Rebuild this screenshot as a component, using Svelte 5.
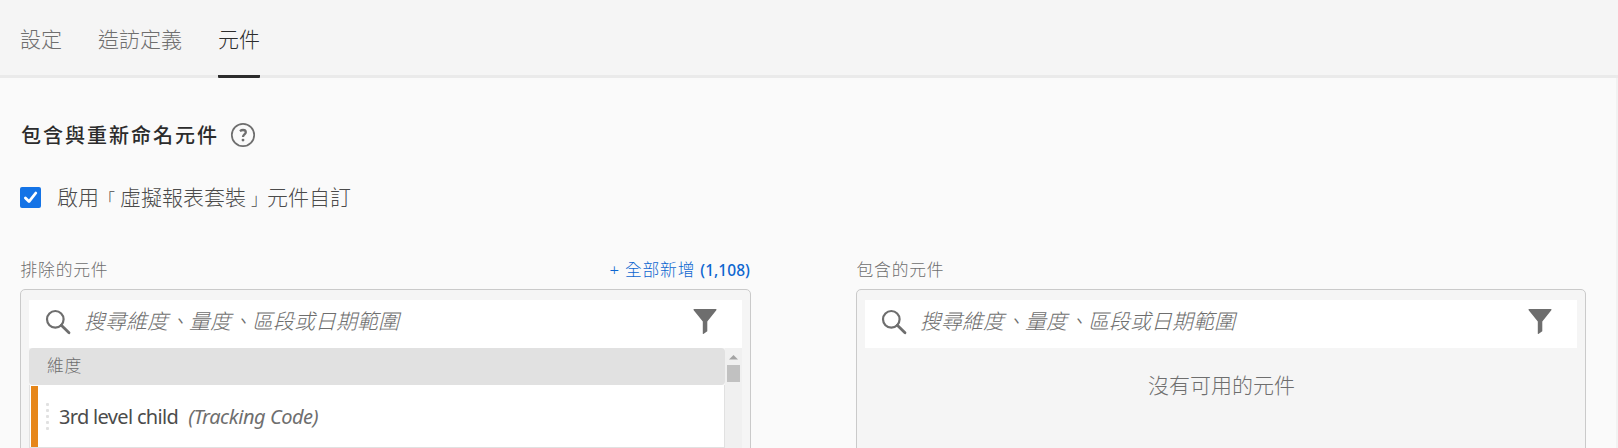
<script>
  const tabs = [
    { label: '設定', active: false },
    { label: '造訪定義', active: false },
    { label: '元件', active: true }
  ];
  const placeholder = '搜尋維度、量度、區段或日期範圍';
  const dots = [0, 1, 2, 3, 4];
</script>

{#snippet search()}
  <div class="search">
    <svg class="lens" width="26" height="26" viewBox="0 0 26 26">
      <circle cx="10.3" cy="10.3" r="8.3" />
      <path d="M16.3 16.3 L24 23.8" />
    </svg>
    <span class="placeholder">{placeholder}</span>
    <svg class="funnel" width="24" height="26" viewBox="0 0 24 26">
      <path d="M.9 0H23.1Q23.9 .4 23.3 1.2L14.3 12.4V22.2L10.4 25Q9.8 25.2 9.8 24.5V12.4L.7 1.2Q.1 .4 .9 0Z" />
    </svg>
  </div>
{/snippet}

<div class="page">
  <nav>
    {#each tabs as tab}
      <span class="tab" class:active={tab.active}>{tab.label}</span>
    {/each}
  </nav>
  <main>
    <header>
      <h2>包含與重新命名元件</h2>
      <svg width="26" height="26" viewBox="0 0 26 26" class="help">
        <circle cx="13" cy="13" r="11.2" />
        <path d="M9.9 9.1C11 8.3 12.1 8 13 8C14.8 8 15.8 9 15.8 10.3C15.8 12.3 13 12.7 13 14.9" />
        <circle class="point" cx="13" cy="18.1" r="1.45" />
      </svg>
    </header>
    <label class="enable">
      <span class="box">
        <svg width="21" height="21" viewBox="0 0 21 21"><path d="M5.4 11 L9 14.6 L15.8 6" /></svg>
      </span>
      <span class="text">啟用<span class="open">「</span>虛擬報表套裝<span class="close">」</span>元件自訂</span>
    </label>
    <div class="columns">
      <section>
        <div class="caption">
          <span>排除的元件</span>
          <a class="add"><span>+ 全部新增</span><span class="count">(1,108)</span></a>
        </div>
        <div class="panel">
          {@render search()}
          <div class="list">
            <div class="items">
              <div class="group">維度</div>
              <div class="row">
                <i class="stripe"></i>
                <span class="grip">{#each dots as d}<i></i>{/each}</span>
                <span class="name">3rd level child</span>
                <em>(Tracking Code)</em>
              </div>
            </div>
            <div class="scroll">
              <svg width="9" height="5" viewBox="0 0 9 5"><path d="M4.5 0L9 4.5H0Z" /></svg>
              <div class="thumb"></div>
            </div>
          </div>
        </div>
      </section>
      <section>
        <div class="caption"><span>包含的元件</span></div>
        <div class="panel">
          {@render search()}
          <p class="empty">沒有可用的元件</p>
        </div>
      </section>
    </div>
  </main>
</div>

<style>
  .page {
    box-sizing: border-box;
    height: 448px;
    overflow: hidden;
    background: #fafafa;
    color: #4b4b4b;
    font-family: "Noto Sans", "Noto Sans CJK TC", sans-serif;
    font-size: 21px;
    font-weight: 300;
    line-height: 30px;
    white-space: nowrap;
    display: flex;
    flex-direction: column;
  }
  nav {
    box-sizing: border-box;
    flex: none;
    height: 78px;
    padding-left: 20px;
    display: flex;
    gap: 36px;
    background: #f5f5f5;
    border-bottom: 3px solid #eaeaea;
    color: #6e6e6e;
  }
  .tab {
    box-sizing: border-box;
    height: 78px;
    padding-top: 24px;
  }
  .active {
    color: #2c2c2c;
    border-bottom: 3px solid #2c2c2c;
    border-radius: 1px;
  }
  main {
    flex: 1;
    min-height: 0;
    padding: 42px 31px 0 20px;
    border-right: 2px solid #f2f2f2;
    overflow: hidden;
  }
  header {
    height: 30px;
    display: flex;
    align-items: center;
    gap: 11px;
    padding-left: 1px;
  }
  h2 {
    margin: 1px 0 0;
    font-size: 20px;
    line-height: 30px;
    letter-spacing: 2px;
    font-weight: 500;
    color: #2c2c2c;
  }
  .help { margin-top: 0; }
  .help circle, .help path {
    fill: none;
    stroke: #6e6e6e;
    stroke-width: 1.7;
  }
  .help path { stroke-width: 2.3; }
  .help .point { fill: #6e6e6e; stroke: none; }
  .enable {
    height: 30px;
    margin-top: 33px;
    display: flex;
    align-items: center;
    gap: 15px;
  }
  .text { padding: 0 0 2px 1px; }
  .open, .close { font-size: 16px; line-height: 1; }
  .open { margin-right: 5px; }
  .close { margin-left: 5px; }
  .box {
    width: 21px;
    height: 21px;
    display: flex;
    background: #1473e6;
    border-radius: 2px;
    margin-bottom: 1px;
  }
  .box path {
    fill: none;
    stroke: #fff;
    stroke-width: 2.8;
    stroke-linecap: round;
    stroke-linejoin: round;
  }
  .columns {
    margin-top: 44px;
    display: grid;
    grid-template-columns: 731px 730px;
    column-gap: 105px;
  }
  .caption {
    height: 32px;
    padding-left: .5px;
    display: flex;
    justify-content: space-between;
    font-size: 16.8px;
    line-height: 26px;
    letter-spacing: .8px;
    color: #6e6e6e;
  }
  .add {
    color: #0d66d0;
    display: flex;
    gap: 5px;
    padding-right: 1px;
  }
  .count {
    font-size: 15.5px;
    font-weight: 500;
    letter-spacing: .05px;
  }
  .panel {
    box-sizing: border-box;
    height: 220px;
    padding: 10px 8px;
    border: 1px solid #cacaca;
    border-radius: 5px;
    background: #f5f5f5;
  }
  .search {
    box-sizing: border-box;
    height: 48px;
    padding: 0 25px 0 16px;
    display: flex;
    align-items: center;
    background: #fff;
    color: #6e6e6e;
  }
  .lens {
    fill: none;
    stroke: #6e6e6e;
    stroke-width: 2.2;
    margin-right: 13px;
    margin-top: -4px;
  }
  .lens path { stroke-width: 2.8; stroke-linecap: round; }
  .placeholder {
    flex: 1;
    font-style: italic;
    padding-bottom: 7px;
  }
  .funnel { fill: #6e6e6e; margin-top: -4px; }
  .list { display: flex; height: 150px; }
  .items { flex: 1; }
  .group {
    box-sizing: border-box;
    height: 37px;
    padding-left: 18px;
    border-radius: 4px;
    background: #e1e1e1;
    color: #6e6e6e;
    font-size: 16.8px;
    line-height: 35px;
    letter-spacing: .8px;
  }
  .row {
    box-sizing: border-box;
    height: 63px;
    border: 1px solid #e1e1e1;
    border-top: 0;
    padding: 1px 0 0 1px;
    display: flex;
    align-items: center;
    background: #fff;
  }
  .stripe {
    width: 7px;
    height: 61px;
    background: #e68619;
  }
  .grip {
    display: flex;
    flex-direction: column;
    gap: 3px;
    margin: 0 10px 1px 8px;
  }
  .grip i {
    width: 3px;
    height: 3px;
    background: #e1e1e1;
    border-radius: 1px;
  }
  .name {
    font-size: 20px;
    font-weight: 400;
    letter-spacing: -.67px;
    margin-right: 10px;
  }
  em {
    font-size: 20px;
    font-weight: 400;
    letter-spacing: -.45px;
    color: #6e6e6e;
  }
  .scroll {
    box-sizing: border-box;
    width: 17px;
    padding-top: 7px;
    background: #f0f0f0;
    display: flex;
    flex-direction: column;
    align-items: center;
    gap: 5px;
  }
  .scroll svg { fill: #a3a3a3; flex: none; }
  .thumb { width: 13px; height: 17px; background: #c1c1c1; }
  .empty {
    margin: 0;
    padding: 22px 0 0 1px;
    text-align: center;
    color: #6e6e6e;
  }
</style>
